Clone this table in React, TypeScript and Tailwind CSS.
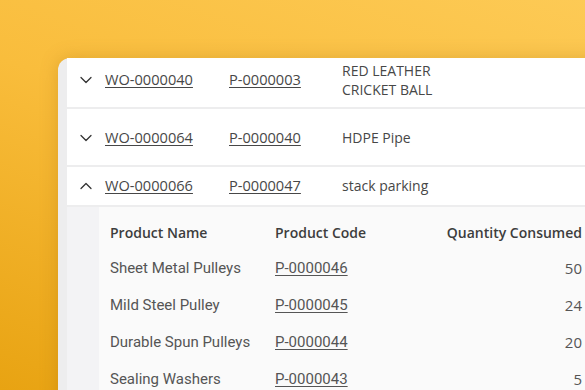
import { ChevronDown, ChevronUp } from 'lucide-react';

type Order = { wo: string; code: string; name: string[]; open?: boolean; h: string };

const orders: Order[] = [
  { wo: 'WO-0000040', code: 'P-0000003', name: ['RED LEATHER', 'CRICKET BALL'], h: 'h-[49px] pb-[5px]' },
  { wo: 'WO-0000064', code: 'P-0000040', name: ['HDPE Pipe'], h: 'h-[56px] pt-[1px]' },
  { wo: 'WO-0000066', code: 'P-0000047', name: ['stack parking'], open: true, h: 'h-[38px]' },
];

const items = [
  { name: 'Sheet Metal Pulleys', code: 'P-0000046', qty: 50 },
  { name: 'Mild Steel Pulley', code: 'P-0000045', qty: 24 },
  { name: 'Durable Spun Pulleys', code: 'P-0000044', qty: 20 },
  { name: 'Sealing Washers', code: 'P-0000043', qty: 5 },
];

export default function App() {
  return (
    <div className="relative h-[390px] w-[585px] overflow-hidden bg-[linear-gradient(200deg,#fdca55_0%,#f9bd3c_45%,#e8a312_100%)]">
      <div className="ml-[58px] mt-[58px] w-[560px] rounded-tl-[12px] bg-[#ededee] pl-[9px] shadow-[0_0_18px_rgba(150,90,0,0.25)] font-['Open_Sans',sans-serif] text-[14.6px] text-[#474747]">
        <div className="flex flex-col gap-[2px]">
          {orders.map((o) => (
            <div key={o.wo} className={`flex items-center bg-white ${o.h}`}>
              <div className="flex w-[38px] justify-end pr-[9px]">
                {o.open ? (
                  <ChevronUp size={20} strokeWidth={1.5} className="text-[#333]" />
                ) : (
                  <ChevronDown size={20} strokeWidth={1.5} className="text-[#333]" />
                )}
              </div>
              <span className="w-[124px] underline underline-offset-2">{o.wo}</span>
              <span className="w-[113px] underline underline-offset-2">{o.code}</span>
              <div className="text-[14px] leading-[19.5px]">
                {o.name.map((l) => (
                  <div key={l}>{l}</div>
                ))}
              </div>
            </div>
          ))}
        </div>
        <div className="mt-[2px] bg-[#f3f3f5] pl-[32px]">
          <div className="w-[486px] bg-[#fafafa] pb-6 pl-[11px] pr-[3px] pt-[14px]">
            <div className="flex h-[22px] items-center text-[14px] font-semibold text-[#3d3d3d]">
              <span className="w-[165px]">Product Name</span>
              <span className="w-[150px]">Product Code</span>
              <span className="flex-1 text-right">Quantity Consumed</span>
            </div>
            {items.map((it) => (
              <div key={it.code} className="mt-[14.7px] flex h-[22px] items-center text-[15px] text-[#555]">
                <span className="w-[165px] font-['Roboto',sans-serif]">{it.name}</span>
                <span className="w-[150px] font-['Roboto',sans-serif] underline underline-offset-2">{it.code}</span>
                <span className="flex-1 text-right">{it.qty}</span>
              </div>
            ))}
          </div>
        </div>
      </div>
    </div>
  );
}
